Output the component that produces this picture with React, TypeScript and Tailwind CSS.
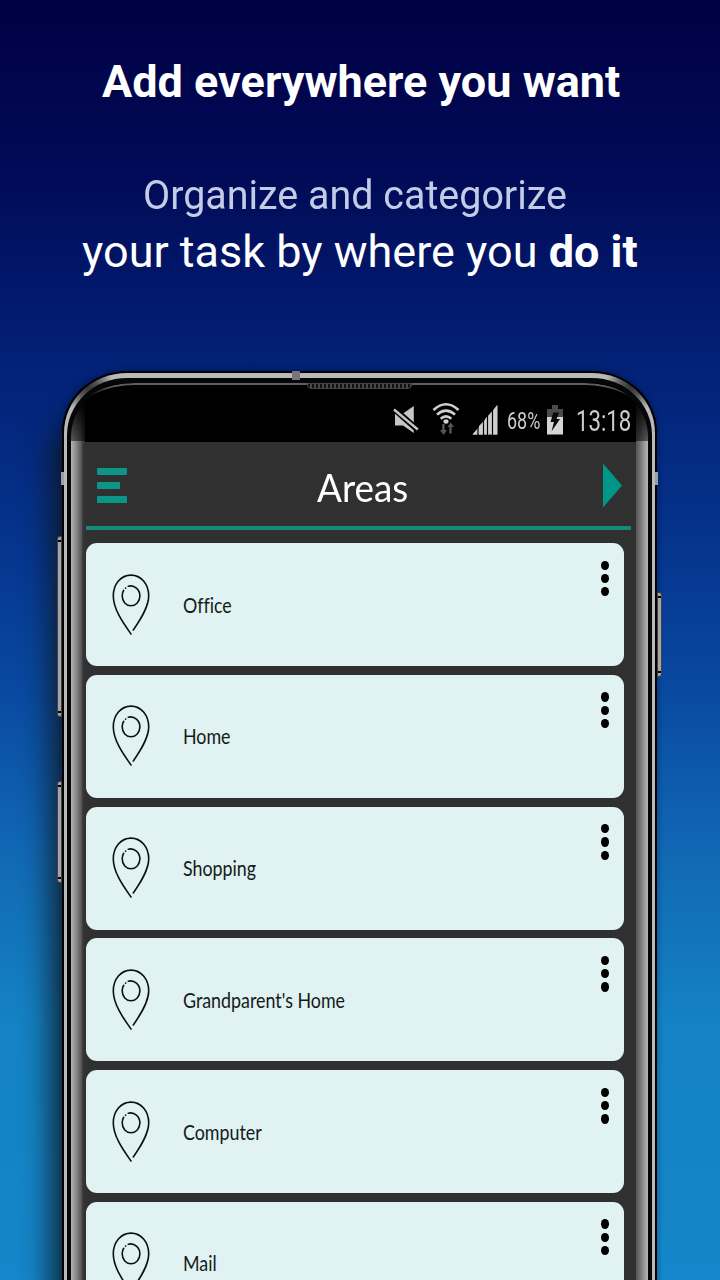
import React from "react";

const areas = ["Office", "Home", "Shopping", "Grandparent's Home", "Computer", "Mail"];

function PinIcon() {
  return (
    <svg className="h-[62px] w-[38px] shrink-0 -translate-y-[0.5px]" viewBox="0 0 38 62" fill="none" stroke="#0b0f0f" strokeWidth="1.6" strokeLinecap="round">
      <path d="M19 60.500C13.500 52.500 1.300 37 1.300 22.500C1.300 10.500 9 1.600 19 1.600S36.700 10.500 36.700 22.500C36.700 34 27.500 47.500 21.300 56.500" />
      <path d="M16.300 12.700C22.500 10.900 27.900 16.500 27.900 22.300C27.900 28.200 23.900 32.300 19 32.300S10.200 28.200 10.200 22.300C10.200 20 10.700 18.300 11.700 16.800" />
      <path d="M13.600 14.600L13.700 14.500" />
    </svg>
  );
}

function AreaCard({ name }: { name: string }) {
  return (
    <div className="flex h-[123px] w-[538px] shrink-0 justify-between rounded-[11px] bg-[#e0f2f1] pr-[15px] pl-[26px]">
      <div className="flex items-center">
        <PinIcon />
        <span className="ml-[33px] origin-left -translate-y-[0.5px] scale-x-[0.87] text-[20.500px] leading-6 whitespace-nowrap text-[#151a1a] [font-variant-ligatures:none]">{name}</span>
      </div>
      <div className="flex flex-col gap-1 pt-[17.500px]">
        <i className="h-[9.300px] w-2 rounded-[50%] bg-black" />
        <i className="h-[9.300px] w-2 rounded-[50%] bg-black" />
        <i className="h-[9.300px] w-2 rounded-[50%] bg-black" />
      </div>
    </div>
  );
}

function StatusIcons() {
  return (
    <svg className="h-[36px] w-[112px] shrink-0" viewBox="390 402 112 36">
      <path d="M395 413.500H403L413.800 406V433L403 425.500H395Z" fill="#c6c6c6" />
      <path d="M392.500 407.500L419 431" stroke="#000" strokeWidth="6" />
      <path d="M394 409.500L417.800 429.500" stroke="#c6c6c6" strokeWidth="2.400" />
      <g fill="none" stroke="#d0d0d0" strokeWidth="2.600">
        <path d="M433.500 410Q446 398.500 458.500 410" />
        <path d="M437 414.600Q446 406.500 455 414.600" />
        <path d="M440.700 418.800Q446 414 451.300 418.800" />
      </g>
      <ellipse cx="446" cy="421.500" rx="2.600" ry="2.200" fill="#d0d0d0" />
      <path d="M442.200 424V430H440L443.500 435L447 430H444.600V424ZM449.300 433.500V427H447.500L450.700 422.500L454 427H451.700V433.500Z" fill="#565656" />
      <path d="M472.500 434.500L477 430V434.500ZM479 434.500V426L483 422V434.500ZM485 434.500V419L489 415V434.500ZM491 434.500V413.500L495 409.500V434.500ZM493 411.500L497.300 405V434.500H493Z" fill="#cfcfcf" />
      <path d="M472.500 434.500L497.300 405V434.500Z" fill="#cfcfcf" />
      <path d="M478 405V435M483.500 405V435M487.500 405V435M492.500 405V435" stroke="#000" strokeWidth="1.200" />
    </svg>
  );
}

function BatteryIcon() {
  return (
    <svg className="h-[30px] w-[16px] shrink-0" viewBox="0 0 16 30">
      <path d="M0 4H5V0H11V4H16V13H0Z" fill="#4b4b4b" />
      <path d="M0 12H16V29.500H0Z" fill="#d6d6d6" />
      <path d="M6.300 7.500H12L9.600 14H13L4.500 26.500L7 17H3.500Z" fill="#080808" />
    </svg>
  );
}

function SideButton({ className }: { className: string }) {
  return (
    <div className={"absolute flex w-[5px] flex-col justify-between border border-black/60 bg-[#a5a4aa] py-[3px] " + className}>
      <i className="h-[2px] w-full bg-black" />
      <i className="h-[2px] w-full bg-black" />
    </div>
  );
}

function Phone() {
  return (
    <div className="relative mt-[371px] ml-[62px] h-[1100px] w-[595px] rounded-t-[65px_61px] bg-black px-[2px] pt-[1.500px] shadow-[-20px_28px_28px_-8px_rgba(14,22,30,0.8),0_0_6px_rgba(0,0,20,0.35)]">
      <SideButton className="top-[165px] -left-[5px] h-[181px] rounded-l-[3px]" />
      <SideButton className="top-[410px] -left-[5px] h-[102px] rounded-l-[3px]" />
      <SideButton className="top-[221px] -right-[5px] h-[85px] rounded-r-[3px]" />
      <div className="h-full rounded-t-[63px_60px] bg-[#b9b9b9] bg-[radial-gradient(circle_at_24px_14px,#333_0,#555_10px,transparent_26px),radial-gradient(circle_at_567px_14px,#333_0,#555_10px,transparent_26px)] px-[3px] pt-[5.500px]">
        <div className="h-full rounded-t-[60px_57px] bg-[#050607] px-[4px] pt-[5px]">
          <div className="relative h-full overflow-hidden rounded-t-[56px_54px] bg-black">
            <div className="absolute inset-x-[8px] top-0 h-[40px] rounded-t-[56px_30px] border-t-[2px] border-[#606060] [mask-image:linear-gradient(black_3px,transparent_18px)]" />
            <div className="flex h-[59px] items-center pt-[15px] pl-[319px]">
              <StatusIcons />
              <span className="ml-[5px] block w-[34px] translate-y-[2px] font-[Roboto] text-[23px] leading-7 text-[#cdcdcd]"><span className="block origin-left scale-x-[0.78]">68%</span></span>
              <span className="ml-[6px]"><BatteryIcon /></span>
              <span className="ml-[13px] block w-[54px] translate-y-px font-[Roboto] text-[30px] leading-8 text-[#cdcdcd]"><span className="block origin-left scale-x-[0.74]">13:18</span></span>
            </div>
            <div className="h-full bg-[#303030] pl-[15px] font-[Lato,sans-serif]">
              <header className="flex h-[88px] w-[545px] items-center justify-between border-b-4 border-[#16897d] pt-[3px] pr-[9px] pl-[11px]">
                <div className="flex h-[35px] w-[30px] flex-col justify-between">
                  <i className="h-[7px] w-[30px] rounded-[1px] bg-[#0d9687]" />
                  <i className="h-[7px] w-[22.500px] rounded-[1px] bg-[#0d9687]" />
                  <i className="h-[7px] w-[30px] rounded-[1px] bg-[#0d9687]" />
                </div>
                <h2 className="mt-0.5 mr-[5px] w-[91px] text-[38px] leading-[48px] text-white"><span className="block origin-left scale-x-[0.97]">Areas</span></h2>
                <i className="h-[44px] w-[19px] bg-[#009688] [clip-path:polygon(0_0,100%_50%,0_100%)]" />
              </header>
              <div className="mt-[13px] flex flex-col gap-[8.800px]">
                {areas.map((a) => <AreaCard key={a} name={a} />)}
              </div>
            </div>
            <div className="absolute bottom-0 left-0 top-[16px] w-[14px] bg-[linear-gradient(to_right,#b4b4b4_0,#858585_40%,#555_75%,#3d3d3d_82%,#303030)] [mask-image:linear-gradient(transparent,rgba(0,0,0,.5)_42px,black_42px)]" />
            <div className="absolute right-0 bottom-0 top-[16px] w-[12px] bg-[linear-gradient(to_left,#b4b4b4_0,#8f8f8f_40%,#6b6868_75%,#555)] [mask-image:linear-gradient(transparent,rgba(0,0,0,.5)_42px,black_42px)]" />
          </div>
        </div>
      </div>
      <i className="absolute top-0 left-[230px] h-[9px] w-[8px] bg-[#77757a]" />
      <i className="absolute top-[101px] -left-px h-[13px] w-[3px] bg-[#9d9da5]" />
      <i className="absolute top-[101px] -right-px h-[13px] w-[3px] bg-[#9d9da5]" />
      <i className="absolute top-[12px] left-[245px] h-[6px] w-[105px] rounded-b-sm border border-[#444] bg-[repeating-linear-gradient(to_right,#111_0,#111_2.500px,#484848_2.500px,#484848_4px)]" />
    </div>
  );
}

export default function App() {
  return (
    <main className="relative h-[1280px] w-[720px] overflow-hidden bg-[linear-gradient(#000043_0,#010b58_14%,#021f74_27%,#05328b_41%,#0949a0_54%,#1169b4_67%,#1482c4_80%,#1586c9_100%)]">
      <div className="absolute inset-x-0 top-0 font-[Roboto,sans-serif] text-white">
        <h1 className="mt-[56px] ml-[102px] w-max text-[45px] leading-[52px] font-bold">Add everywhere you want</h1>
        <p className="mt-[64px] ml-[143px] w-max origin-left scale-x-[0.986] text-[40px] leading-[48px] text-[#c3cbe5]">Organize and categorize</p>
        <p className="mt-[5px] ml-[82px] w-max text-[45px] leading-[54px]">your task by where you <b>do it</b></p>
      </div>
      <Phone />
    </main>
  );
}
